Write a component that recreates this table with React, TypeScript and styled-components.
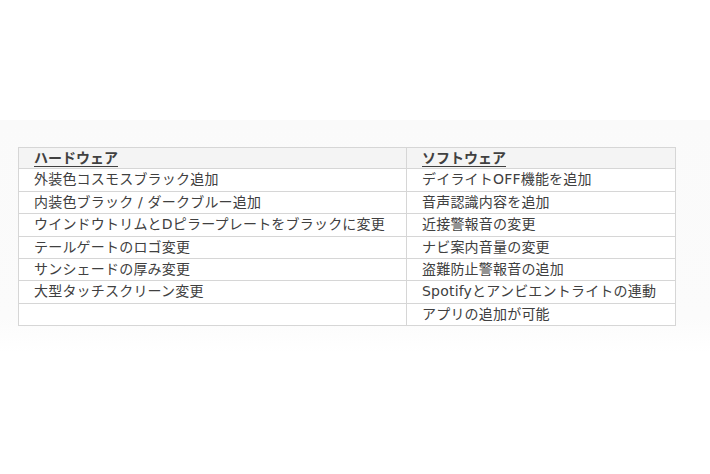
import React from 'react';
import styled, { createGlobalStyle } from 'styled-components';

const GlobalStyle = createGlobalStyle`
    html, body {
        margin: 0;
        padding: 0;
        background: #ffffff;
    }
    body {
        font-family: "DejaVu Sans", "Noto Sans CJK JP", sans-serif;
    }
`;

const Page = styled.div`
    width: 710px;
    height: 474px;
    padding-top: 120px;
    box-sizing: border-box;
`;

const Band = styled.div`
    background: linear-gradient(to bottom, #fafafa 0%, #fbfbfb 85%, #ffffff 100%);
    padding: 27px 35px 27px 18px;
`;

const Table = styled.table`
    width: 658px;
    table-layout: fixed;
    border-collapse: collapse;
    background: #ffffff;
    color: #404040;
    font-size: 14px;
`;

const HeadCell = styled.th<{ $width?: number }>`
    box-sizing: border-box;
    width: ${(p) => (p.$width ? `${p.$width}px` : 'auto')};
    padding: 0 15px;
    border: 1px solid #d6d6d6;
    background: #f4f4f4;
    text-align: left;
    font-weight: bold;
    line-height: 20.4px;
`;

const HeadLabel = styled.span`
    text-decoration: underline;
    text-underline-offset: 3px;
`;

const Cell = styled.td`
    padding: 0 15px;
    border: 1px solid #d6d6d6;
    line-height: 21.4px;
    white-space: nowrap;
    letter-spacing: 0.2px;
`;

const rows: [string, string][] = [
    ['外装色コスモスブラック追加', 'デイライトOFF機能を追加'],
    ['内装色ブラック / ダークブルー追加', '音声認識内容を追加'],
    ['ウインドウトリムとDピラープレートをブラックに変更', '近接警報音の変更'],
    ['テールゲートのロゴ変更', 'ナビ案内音量の変更'],
    ['サンシェードの厚み変更', '盗難防止警報音の追加'],
    ['大型タッチスクリーン変更', 'Spotifyとアンビエントライトの連動'],
    ['\u00a0', 'アプリの追加が可能'],
];

export default function App() {
    return (
        <>
            <GlobalStyle />
            <Page>
                <Band>
                    <Table>
                        <thead>
                            <tr>
                                <HeadCell $width={388}>
                                    <HeadLabel>ハードウェア</HeadLabel>
                                </HeadCell>
                                <HeadCell>
                                    <HeadLabel>ソフトウェア</HeadLabel>
                                </HeadCell>
                            </tr>
                        </thead>
                        <tbody>
                            {rows.map(([hw, sw], i) => (
                                <tr key={i}>
                                    <Cell>{hw}</Cell>
                                    <Cell>{sw}</Cell>
                                </tr>
                            ))}
                        </tbody>
                    </Table>
                </Band>
            </Page>
        </>
    );
}
